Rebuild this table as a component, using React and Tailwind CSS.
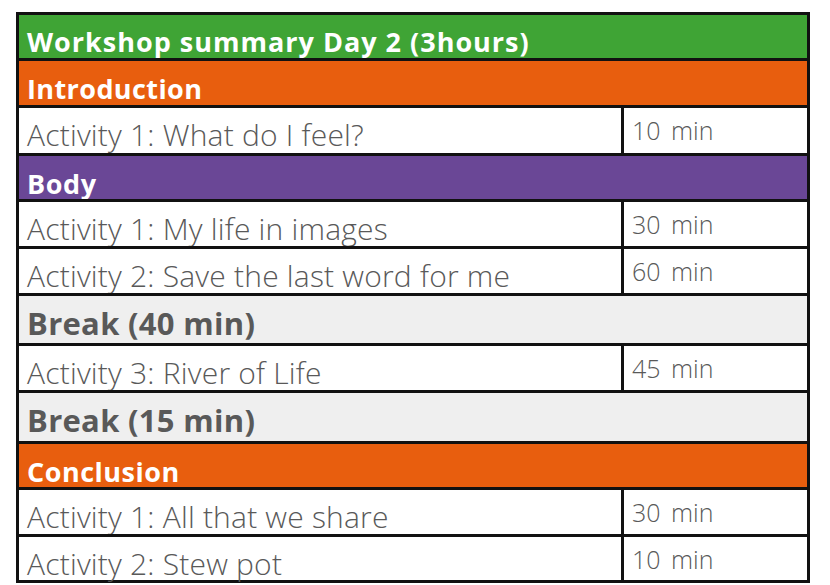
import React from "react";

const font = { fontFamily: "'Open Sans', 'Noto Sans', sans-serif" };

function Header({ text, bg, h, pt, tr }) {
  return (
    <div className={`${bg} ${h} ${pt} ${tr} pl-[8px] text-white font-bold text-[27px] leading-none`}>
      {text}
    </div>
  );
}

function Activity({ text, time, h }) {
  return (
    <div className={`flex ${h}`}>
      <div className="w-[602px] pl-[8px] pt-[12px] text-[30px] leading-none font-light tracking-[0.2px] text-[#595959] bg-white">
        {text}
      </div>
      <div className="w-[3px] bg-[#111]" />
      <div className="flex-1 pl-[8px] pt-[10px] text-[25px] leading-none font-light text-[#595959] bg-white [word-spacing:4px]">
        {time}
      </div>
    </div>
  );
}

function Break({ text, h }) {
  return (
    <div className={`${h} bg-[#efefef] pl-[8px] pt-[12px] text-[31px] leading-none font-bold tracking-[0.3px] text-[#595959]`}>
      {text}
    </div>
  );
}

const Line = () => <div className="h-[3px] bg-[#111]" />;

export default function App() {
  return (
    <div className="w-[830px] h-[585px] bg-white pt-[12px] pl-[16px]" style={font}>
      <div className="w-[794px] border-[3px] border-[#111] flex flex-col">
        <Header text="Workshop summary Day 2 (3hours)" bg="bg-[#3fa435]" h="h-[43px]" pt="pt-[13px]" tr="tracking-[1px]" />
        <Line />
        <Header text="Introduction" bg="bg-[#e85e0e]" h="h-[44px]" pt="pt-[14px]" tr="tracking-[0.4px]" />
        <Line />
        <Activity text="Activity 1: What do I feel?" time="10 min" h="h-[45px]" />
        <Line />
        <Header text="Body" bg="bg-[#6a4796]" h="h-[43px]" pt="pt-[14px]" tr="tracking-[0.6px]" />
        <Line />
        <Activity text="Activity 1: My life in images" time="30 min" h="h-[44px]" />
        <Line />
        <Activity text="Activity 2: Save the last word for me" time="60 min" h="h-[44px]" />
        <Line />
        <Break text="Break (40 min)" h="h-[47px]" />
        <Line />
        <Activity text="Activity 3: River of Life" time="45 min" h="h-[44px]" />
        <Line />
        <Break text="Break (15 min)" h="h-[48px]" />
        <Line />
        <Header text="Conclusion" bg="bg-[#e85e0e]" h="h-[43px]" pt="pt-[14px]" tr="tracking-[0.5px]" />
        <Line />
        <Activity text="Activity 1: All that we share" time="30 min" h="h-[44px]" />
        <Line />
        <Activity text="Activity 2: Stew pot" time="10 min" h="h-[43px]" />
      </div>
    </div>
  );
}
